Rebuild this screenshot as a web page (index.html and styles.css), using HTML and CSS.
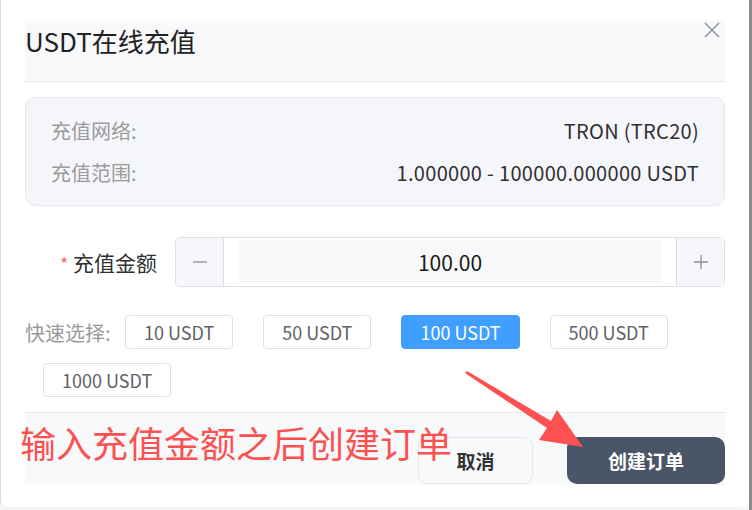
FILE: index.html
```html
<!DOCTYPE html>
<html lang="zh-CN">
<head>
<meta charset="utf-8">
<title>USDT在线充值</title>
<link rel="stylesheet" href="styles.css">
</head>
<body>
<div class="window">
  <div class="dialog">
    <div class="header">
      <h2 class="title">USDT在线充值</h2>
    </div>
    <button class="close" aria-label="关闭">
      <svg width="16" height="16" viewBox="0 0 16 16"><path d="M1 1 L15 15 M15 1 L1 15" stroke="#8c9099" stroke-width="1.4" fill="none"/></svg>
    </button>
    <div class="content">
      <div class="info">
        <div class="info-row"><span class="info-label">充值网络:</span><span class="info-value">TRON (TRC20)</span></div>
        <div class="info-row"><span class="info-label">充值范围:</span><span class="info-value">1.000000 - 100000.000000 USDT</span></div>
      </div>
      <div class="amount-row">
        <label class="amount-label"><span class="req">*</span> 充值金额</label>
        <div class="number-input">
          <span class="step">
            <svg width="16" height="16" viewBox="0 0 16 16"><path d="M1 8 H15" stroke="#8c9099" stroke-width="1.3"/></svg>
          </span>
          <div class="field-wrap"><div class="field">100.00</div></div>
          <span class="step step-plus">
            <svg width="16" height="16" viewBox="0 0 16 16"><path d="M1 8 H15 M8 1 V15" stroke="#8c9099" stroke-width="1.3"/></svg>
          </span>
        </div>
      </div>
      <div class="quick">
        <span class="quick-label">快速选择:</span>
        <button class="chip">10 USDT</button>
        <button class="chip">50 USDT</button>
        <button class="chip chip-active">100 USDT</button>
        <button class="chip">500 USDT</button>
        <button class="chip">1000 USDT</button>
      </div>
    </div>
    <div class="footer">
      <button class="btn btn-cancel">取消</button>
      <button class="btn btn-primary">创建订单</button>
    </div>
  </div>
  <div class="annotation">输入充值金额之后创建订单</div>
  <svg class="arrow" width="752" height="510" viewBox="0 0 752 510">
    <path d="M465 373 L467 371 L551 421 L557 410 L583 447 L539 440 L547 428 Z" fill="#fd5050"/>
  </svg>
</div>
</body>
</html>
```

FILE: styles.css
```css
* { box-sizing: border-box; }
html, body {
  margin: 0;
  padding: 0;
}
body {
  width: 752px;
  height: 510px;
  background: #f4f4f4;
  border-right: 3px solid #8c8c8c;
  font-family: "Noto Sans CJK SC", "Noto Sans", sans-serif;
  overflow: hidden;
}
.window {
  position: relative;
  width: 749px;
  height: 507px;
  background: #fff;
  border-left: 1px solid #dcdcdc;
  border-radius: 0 0 6px 6px;
}
.dialog {
  padding: 21px 24px 0 24px;
}
.header {
  height: 61px;
  background: #f8f9fb;
  border-bottom: 1px solid #e4e7ed;
}
.title {
  margin: 0;
  padding-top: 5px;
  font-size: 26px;
  line-height: 30px;
  font-weight: 400;
  color: #222;
}
.close {
  position: absolute;
  top: 22px;
  right: 29px;
  width: 16px;
  height: 16px;
  padding: 0;
  border: 0;
  background: transparent;
  display: flex;
}
.content {
  padding-top: 15px;
}
.info {
  background: #f5f6fa;
  border: 1px solid #e4e7ed;
  border-radius: 10px;
  padding: 15px 25px 16px;
  display: flex;
  flex-direction: column;
  gap: 8px;
}
.info-row {
  display: flex;
  justify-content: space-between;
  align-items: center;
  height: 34px;
  font-size: 20px;
}
.info-label { color: #9a9a9a; }
.info-value { color: #303030; letter-spacing: 0.3px; }

.amount-row {
  display: flex;
  align-items: center;
  margin-top: 31px;
  gap: 18px;
}
.amount-label {
  width: 132px;
  text-align: right;
  font-size: 21px;
  color: #303030;
}
.req { color: #f56c6c; font-size: 18px; }
.number-input {
  flex: 1;
  height: 50px;
  display: flex;
  border: 1px solid #dcdfe6;
  border-radius: 5px;
  overflow: hidden;
}
.step {
  width: 48px;
  background: #f5f7fa;
  border-right: 1px solid #dcdfe6;
  display: flex;
  align-items: center;
  justify-content: center;
}
.step-plus {
  border-right: 0;
  border-left: 1px solid #dcdfe6;
}
.field-wrap {
  flex: 1;
  padding: 2px 15px 3px;
}
.field {
  height: 100%;
  background: #f7f8fa;
  display: flex;
  align-items: center;
  justify-content: center;
  font-size: 21px;
  color: #1a1a1a;
}

.quick {
  display: flex;
  flex-wrap: wrap;
  align-items: center;
  row-gap: 14px;
  margin-top: 28px;
}
.quick-label {
  width: 82px;
  white-space: nowrap;
  font-size: 20px;
  color: #9a9a9a;
}
.chip {
  height: 34px;
  margin: 0 12px 0 18px;
  padding: 0 18px;
  border: 1px solid #dcdfe6;
  border-radius: 4px;
  background: #fff;
  font-family: inherit;
  font-size: 18px;
  color: #606266;
}
.chip-active {
  background: #409eff;
  border-color: #409eff;
  color: #fff;
}

.footer {
  margin-top: 15px;
  height: 73px;
  background: #f8f9fb;
  border-top: 1px solid #e4e7ed;
  padding-top: 24px;
  display: flex;
  justify-content: flex-end;
  align-items: flex-start;
  gap: 34px;
}
.btn {
  height: 47px;
  border-radius: 10px;
  font-family: inherit;
  font-size: 19px;
  font-weight: 700;
}
.btn-cancel {
  width: 115px;
  background: #f8f9fb;
  border: 1px solid #e2e6ec;
  color: #333;
}
.btn-primary {
  width: 158px;
  background: #4a5568;
  border: 0;
  color: #fff;
}

.annotation {
  position: absolute;
  left: 19px;
  top: 418px;
  font-size: 36px;
  line-height: 48px;
  color: #fd5050;
  white-space: nowrap;
}
.arrow {
  position: absolute;
  left: -1px;
  top: 0;
  pointer-events: none;
}
```
